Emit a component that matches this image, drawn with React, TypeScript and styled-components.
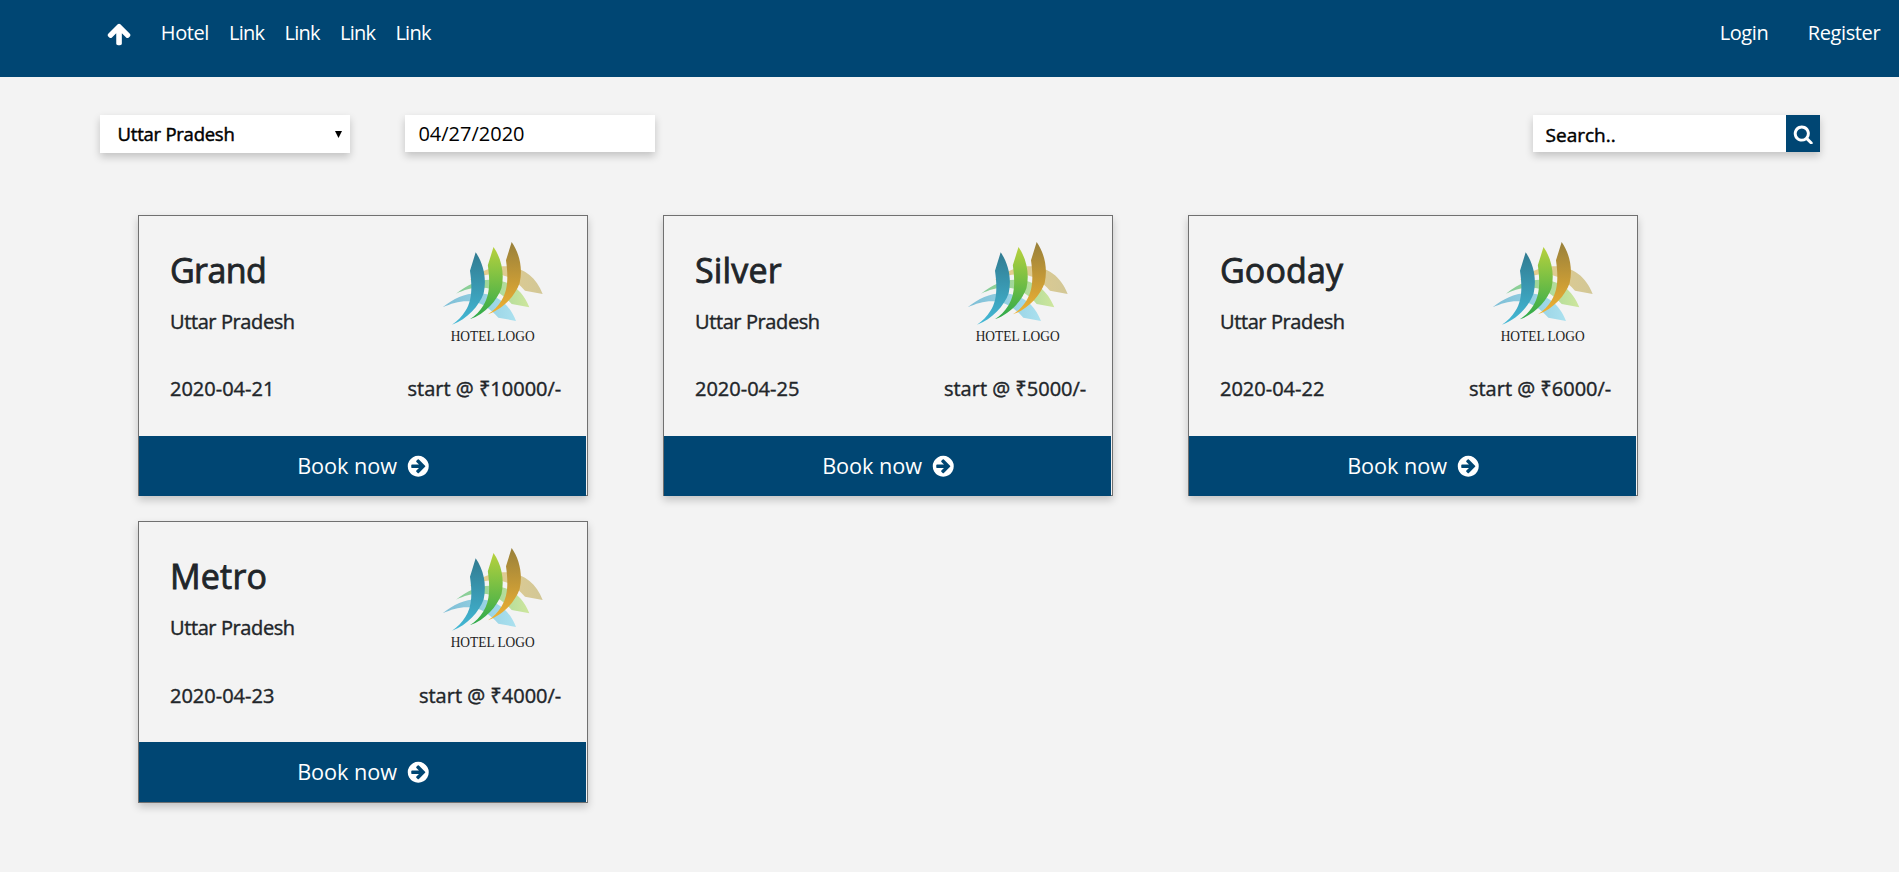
import React from "react";
import styled, { createGlobalStyle } from "styled-components";

const BLUE = "#004673";

const GlobalStyle = createGlobalStyle`
  * { box-sizing: border-box; }
  body {
    margin: 0;
    background: #f3f3f3;
    color: #212529;
    font-family: "Open Sans", "Noto Sans", sans-serif;
    font-size: 20px;
  }
`;

const Page = styled.div`
  min-height: 872px;
`;

const Icon = styled.svg<{ $size: number }>`
  width: ${(p) => p.$size}px;
  height: ${(p) => p.$size}px;
  fill: currentColor;
`;

const Navbar = styled.nav`
  display: flex;
  align-items: flex-start;
  height: 77px;
  padding: 12px 18.8px 0 106.4px;
  background: ${BLUE};
  color: #fff;
  line-height: 41px;
`;

const Brand = styled.a`
  display: flex;
  margin: 9.2px 28.3px 0 0;
`;

const NavLinks = styled.div`
  display: flex;
  gap: 20px;
`;

const AccountLinks = styled.div`
  display: flex;
  gap: 39.5px;
  margin-left: auto;
`;

const NavLink = styled.a<{ $tight?: boolean }>`
  letter-spacing: ${(p) => (p.$tight ? "-0.7px" : "-0.4px")};
`;

const Filters = styled.div`
  display: flex;
  align-items: flex-start;
  height: 38px;
  margin: 38px 79px 0 100px;
`;

const Field = styled.div`
  display: flex;
  width: 250px;
  background: #fff;
  color: #000;
  box-shadow: 0 4px 8px rgba(0, 0, 0, 0.2);
`;

const StateSelect = styled(Field)`
  align-items: center;
  justify-content: space-between;
  height: 38px;
  padding: 0 8px 0 17.6px;
  font-size: 18.5px;
  letter-spacing: -0.25px;
  line-height: 38px;
  -webkit-text-stroke: 0.45px currentColor;
`;

const DateField = styled(Field)`
  height: 37px;
  margin-left: 55px;
  padding-left: 13.4px;
  line-height: 38px;
`;

const SearchBox = styled(Field)`
  width: 287px;
  height: 37px;
  margin-left: auto;
`;

const SearchText = styled.span`
  flex: 1;
  padding-left: 12.6px;
  font-size: 19px;
  line-height: 40px;
  -webkit-text-stroke: 0.45px currentColor;
`;

const SearchButton = styled.button`
  display: flex;
  align-items: center;
  justify-content: center;
  width: 34px;
  padding: 1px 0 0;
  border: 0;
  background: ${BLUE};
  color: #fff;
`;

const HotelGrid = styled.main`
  display: grid;
  grid-template-columns: repeat(3, 450px);
  gap: 24.8px 75px;
  margin: 61.8px 0 0 138px;
`;

const Card = styled.article`
  height: 281.6px;
  border: 1px solid #707070;
  box-shadow: 0 4px 8px rgba(0, 0, 0, 0.2);
`;

const CardHead = styled.div`
  display: flex;
  justify-content: space-between;
  height: 134.2px;
  padding: 0 37px 0 31px;
`;

const HotelName = styled.h2<{ $tracking: number }>`
  margin: 34.3px 0 16.9px;
  font-size: 34px;
  font-weight: 400;
  letter-spacing: ${(p) => p.$tracking}px;
  line-height: 40px;
  -webkit-text-stroke: 0.85px currentColor;
`;

const Detail = styled.p`
  margin: 0;
  line-height: 30px;
  -webkit-text-stroke: 0.4px currentColor;
`;

const Location = styled(Detail)`
  letter-spacing: -0.4px;
`;

const CardInfo = styled.div`
  display: flex;
  justify-content: space-between;
  margin: 24.4px 0 31.4px;
  padding: 0 25.7px 0 31px;
`;

const LogoDrawing = styled.svg`
  width: 120px;
  height: 120px;
  margin-top: 14.2px;
`;

const BookButton = styled.button`
  display: flex;
  align-items: center;
  justify-content: center;
  gap: 9.3px;
  width: 447px;
  height: 60px;
  padding: 0 0 0 3px;
  border: 0;
  background: ${BLUE};
  color: #fff;
  font-family: inherit;
  font-size: 21.7px;
  letter-spacing: -0.05px;
  line-height: 60px;
`;

const ARROW_UP =
  "M1675 971q0 51-37 90l-75 75q-38 38-91 38-54 0-90-38l-294-293v704q0 52-37.5 84.5t-90.5 32.5h-128q-53 0-90.5-32.5t-37.5-84.5v-704l-294 293q-36 38-90 38t-90-38l-75-75q-38-38-38-90 0-53 38-91l651-651q35-37 90-37 54 0 91 37l651 651q37 39 37 91z";
const MAGNIFIER =
  "M1216 832q0-185-131.5-316.5t-316.5-131.5-316.5 131.5-131.5 316.5 131.5 316.5 316.5 131.5 316.5-131.5 131.5-316.5zm512 832q0 52-38 90t-90 38q-54 0-90-38l-343-342q-179 124-399 124-143 0-273.5-55.5t-225-150-150-225-55.5-273.5 55.5-273.5 150-225 225-150 273.5-55.5 273.5 55.5 225 150 150 225 55.5 273.5q0 220-124 399l343 343q37 37 37 90z";
const CIRCLE_ARROW =
  "M1413 896q0-27-18-45l-91-91-362-362q-18-18-45-18t-45 18l-91 91q-18 18-18 45t18 45l189 189h-502q-26 0-45 19t-19 45v128q0 26 19 45t45 19h502l-189 189q-19 19-19 45t19 45l91 91q18 18 45 18t45-18l362-362 91-91q18-18 18-45zm251 0q0 209-103 385.5t-279.5 279.5-385.5 103-385.5-103-279.5-279.5-103-385.5 103-385.5 279.5-279.5 385.5-103 385.5 103 279.5 279.5 103 385.5z";

function Glyph({ path, size }: { path: string; size: number }) {
  return (
    <Icon $size={size} viewBox="0 0 1792 1792" aria-hidden>
      <path d={path} />
    </Icon>
  );
}

const LEAF =
  "M137 67 L120 122 C126 165 128 210 106 243 C97 258 82 274 66 284 C112 268 148 227 161 190 C171 145 160 100 137 67Z";
const WING =
  "M38 232 C70 206 105 190 140 190 C200 190 238 222 258 273 L205 263 C180 235 150 215 120 214 C90 212 65 220 38 232Z";

function HotelLogo({ id }: { id: string }) {
  const gradient = (name: string) => `url(#${id}-${name})`;
  return (
    <LogoDrawing viewBox="0 0 360 360">
      <defs>
        <linearGradient id={`${id}-teal`} x2="0" y2="1">
          <stop stopColor="#317b91" />
          <stop offset="1" stopColor="#43b9d6" />
        </linearGradient>
        <linearGradient id={`${id}-green`} x2="0" y2="1">
          <stop stopColor="#b7d13d" />
          <stop offset="1" stopColor="#2daa4c" />
        </linearGradient>
        <linearGradient id={`${id}-gold`} x2="0" y2="1">
          <stop stopColor="#98803a" />
          <stop offset="1" stopColor="#f0b233" />
        </linearGradient>
        <linearGradient id={`${id}-sky`}>
          <stop stopColor="#7cbdd5" />
          <stop offset="1" stopColor="#abe1ef" />
        </linearGradient>
        <linearGradient id={`${id}-mint`}>
          <stop stopColor="#80cb97" />
          <stop offset="1" stopColor="#cee69d" />
        </linearGradient>
        <linearGradient id={`${id}-sand`}>
          <stop stopColor="#e9cf8d" />
          <stop offset="1" stopColor="#d2c796" />
        </linearGradient>
      </defs>
      <path d={WING} transform="translate(80 -81)" fill={gradient("sand")} />
      <path d={WING} transform="translate(40 -41)" fill={gradient("mint")} />
      <path d={WING} fill={gradient("sky")} />
      <path d={LEAF} fill={gradient("teal")} />
      <path d={LEAF} transform="translate(53.5 -16)" fill={gradient("green")} />
      <path d={LEAF} transform="translate(108 -31)" fill={gradient("gold")} />
      <text
        x="62"
        y="334"
        textLength="252"
        lengthAdjust="spacingAndGlyphs"
        fontFamily="'Liberation Serif', serif"
        fontSize="43"
        fill="#222"
      >
        HOTEL LOGO
      </text>
    </LogoDrawing>
  );
}

const hotels = [
  { name: "Grand", state: "Uttar Pradesh", date: "2020-04-21", price: 10000, tracking: -0.6 },
  { name: "Silver", state: "Uttar Pradesh", date: "2020-04-25", price: 5000, tracking: 0.15 },
  { name: "Gooday", state: "Uttar Pradesh", date: "2020-04-22", price: 6000, tracking: 0.15 },
  { name: "Metro", state: "Uttar Pradesh", date: "2020-04-23", price: 4000, tracking: 0.2 },
];

export default function App() {
  return (
    <Page>
      <GlobalStyle />
      <Navbar>
        <Brand><Glyph path={ARROW_UP} size={26.1} /></Brand>
        <NavLinks>
          <NavLink>Hotel</NavLink>
          <NavLink $tight>Link</NavLink>
          <NavLink $tight>Link</NavLink>
          <NavLink $tight>Link</NavLink>
          <NavLink $tight>Link</NavLink>
        </NavLinks>
        <AccountLinks>
          <NavLink>Login</NavLink>
          <NavLink>Register</NavLink>
        </AccountLinks>
      </Navbar>
      <Filters>
        <StateSelect>
          Uttar Pradesh
          <svg width="7" height="7" viewBox="0 0 7 7"><path d="M0 0H7L3.5 7Z" /></svg>
        </StateSelect>
        <DateField>04/27/2020</DateField>
        <SearchBox>
          <SearchText>Search..</SearchText>
          <SearchButton aria-label="Search"><Glyph path={MAGNIFIER} size={20.5} /></SearchButton>
        </SearchBox>
      </Filters>
      <HotelGrid>
        {hotels.map((hotel) => (
          <Card key={hotel.name}>
            <CardHead>
              <div>
                <HotelName $tracking={hotel.tracking}>{hotel.name}</HotelName>
                <Location>{hotel.state}</Location>
              </div>
              <HotelLogo id={hotel.name} />
            </CardHead>
            <CardInfo>
              <Detail>{hotel.date}</Detail>
              <Detail>start @ ₹{hotel.price}/-</Detail>
            </CardInfo>
            <BookButton>Book now <Glyph path={CIRCLE_ARROW} size={24.5} /></BookButton>
          </Card>
        ))}
      </HotelGrid>
    </Page>
  );
}
